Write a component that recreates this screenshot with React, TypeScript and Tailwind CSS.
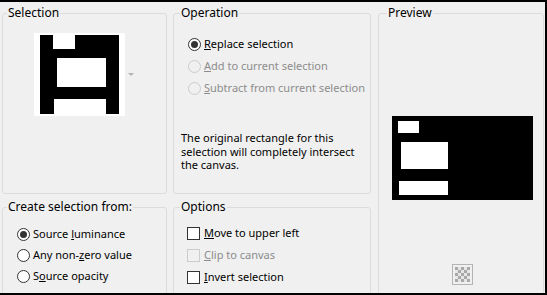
import React from 'react';

const Radio = ({ checked, disabled }: { checked?: boolean; disabled?: boolean }) => (
  <span
    className={`w-[13px] h-[13px] shrink-0 rounded-full border flex items-center justify-center ${
      disabled ? 'border-[#cccccc] bg-[#f0f0f0]' : 'border-[#333333] bg-white'
    }`}
  >
    {checked && <span className="w-[7px] h-[7px] rounded-full bg-[#333333]" />}
  </span>
);

const Check = ({ disabled }: { disabled?: boolean }) => (
  <span
    className={`w-[13px] h-[13px] shrink-0 border ${
      disabled ? 'border-[#cccccc] bg-[#f0f0f0]' : 'border-[#333333] bg-white'
    }`}
  />
);

const Group = ({
  title,
  className,
  legendClass = 'ml-[4px]',
  children,
}: {
  title: string;
  className: string;
  legendClass?: string;
  children: React.ReactNode;
}) => (
  <fieldset className={`shrink-0 border border-[#dcdcdc] rounded-[3px] ${className}`}>
    <legend className={`${legendClass} px-[1px] leading-[16px] text-[12px] text-black`}>{title}</legend>
    {children}
  </fieldset>
);

const Row = ({ children, disabled }: { children: React.ReactNode; disabled?: boolean }) => (
  <div className={`flex items-center gap-[3px] whitespace-nowrap ${disabled ? 'text-[#8c8c8c]' : 'text-black'}`}>
    {children}
  </div>
);

export default function App() {
  return (
    <div className="w-[547px] h-[295px] overflow-hidden bg-[#f0f0f0] border-t-2 border-r-2 border-b-2 border-black flex pl-[2px] font-['Noto_Sans',sans-serif] text-[11px]">
      {/* Left column */}
      <div className="w-[165px] shrink-0 flex flex-col pt-[3px] gap-[5px]">
        <Group title="Selection" className="h-[189px]">
          <div className="mt-[12px] ml-[31px] flex items-center">
            <svg width="91" height="83" viewBox="0 0 91 83">
              <rect x="0" y="0" width="91" height="83" fill="#fff" />
              <rect x="6" y="2" width="79" height="79" fill="#000" />
              <rect x="19" y="2" width="22" height="14" fill="#fff" />
              <rect x="23" y="25" width="49" height="29" fill="#fff" />
              <rect x="20" y="66" width="52" height="15" fill="#fff" />
            </svg>
            <svg width="6" height="4" viewBox="0 0 6 4" className="ml-[3px]">
              <path d="M0 0 L6 0 L3 3 Z" fill="#b4b4b4" />
            </svg>
          </div>
        </Group>
        <Group title="Create selection from:" className="h-[110px]">
          <div className="mt-[9px] pl-[14px] flex flex-col">
            <div className="h-[21px] flex items-center">
              <Row>
                <Radio checked />
                <span>Source <span className="underline">l</span>uminance</span>
              </Row>
            </div>
            <div className="h-[21px] flex items-center">
              <Row>
                <Radio />
                <span>Any non-<span className="underline">z</span>ero value</span>
              </Row>
            </div>
            <div className="h-[21px] flex items-center">
              <Row>
                <Radio />
                <span>S<span className="underline">o</span>urce opacity</span>
              </Row>
            </div>
          </div>
        </Group>
      </div>

      {/* Middle column */}
      <div className="w-[198px] shrink-0 ml-[6px] flex flex-col pt-[3px] gap-[5px]">
        <Group title="Operation" className="h-[189px]" legendClass="ml-[6px]">
          <div className="mt-[12px] pl-[14px] flex flex-col">
            <div className="h-[22px] flex items-center">
              <Row>
                <Radio checked />
                <span><span className="underline">R</span>eplace selection</span>
              </Row>
            </div>
            <div className="h-[22px] flex items-center">
              <Row disabled>
                <Radio disabled />
                <span><span className="underline">A</span>dd to current selection</span>
              </Row>
            </div>
            <div className="h-[22px] flex items-center">
              <Row disabled>
                <Radio disabled />
                <span><span className="underline">S</span>ubtract from current selection</span>
              </Row>
            </div>
          </div>
          <p className="mt-[32px] pl-[7px] leading-[13.5px] whitespace-nowrap text-black">
            The original rectangle for this
            <br />
            selection will completely intersect
            <br />
            the canvas.
          </p>
        </Group>
        <Group title="Options" className="h-[110px]" legendClass="ml-[6px]">
          <div className="mt-[8px] pl-[13px] flex flex-col">
            <div className="h-[21px] flex items-center">
              <Row>
                <Check />
                <span className="ml-[1px]"><span className="underline">M</span>ove to upper left</span>
              </Row>
            </div>
            <div className="h-[22px] flex items-center">
              <Row disabled>
                <Check disabled />
                <span className="ml-[1px]"><span className="underline">C</span>lip to canvas</span>
              </Row>
            </div>
            <div className="h-[22px] flex items-center">
              <Row>
                <Check />
                <span className="ml-[1px]"><span className="underline">I</span>nvert selection</span>
              </Row>
            </div>
          </div>
        </Group>
      </div>

      {/* Preview */}
      <div className="w-[166px] shrink-0 ml-[7px] pt-[3px] flex flex-col">
        <Group title="Preview" className="h-[300px]" legendClass="ml-[8px]">
          <div className="mt-[95px] ml-[13px]">
            <svg width="141" height="84" viewBox="0 0 141 84">
              <rect x="0" y="0" width="141" height="84" fill="#000" />
              <rect x="6" y="5" width="21" height="12" fill="#fff" />
              <rect x="9" y="26" width="47" height="27" fill="#fff" />
              <rect x="7" y="65" width="49" height="14" fill="#fff" />
            </svg>
          </div>
          <div className="mt-[64px] ml-[73px]">
            <svg width="21" height="21" viewBox="0 0 21 21">
              <rect x="0.5" y="0.5" width="20" height="20" fill="#f0f0f0" stroke="#b4b4b4" />
              <rect x="3" y="3" width="15" height="15" fill="#e6e6e6" />
              <g fill="#a8a8a8">
                <rect x="3" y="3" width="3" height="3" />
                <rect x="9" y="3" width="3" height="3" />
                <rect x="15" y="3" width="3" height="3" />
                <rect x="6" y="6" width="3" height="3" />
                <rect x="12" y="6" width="3" height="3" />
                <rect x="3" y="9" width="3" height="3" />
                <rect x="9" y="9" width="3" height="3" />
                <rect x="15" y="9" width="3" height="3" />
                <rect x="6" y="12" width="3" height="3" />
                <rect x="12" y="12" width="3" height="3" />
                <rect x="3" y="15" width="3" height="3" />
                <rect x="9" y="15" width="3" height="3" />
                <rect x="15" y="15" width="3" height="3" />
              </g>
            </svg>
          </div>
        </Group>
      </div>
    </div>
  );
}
